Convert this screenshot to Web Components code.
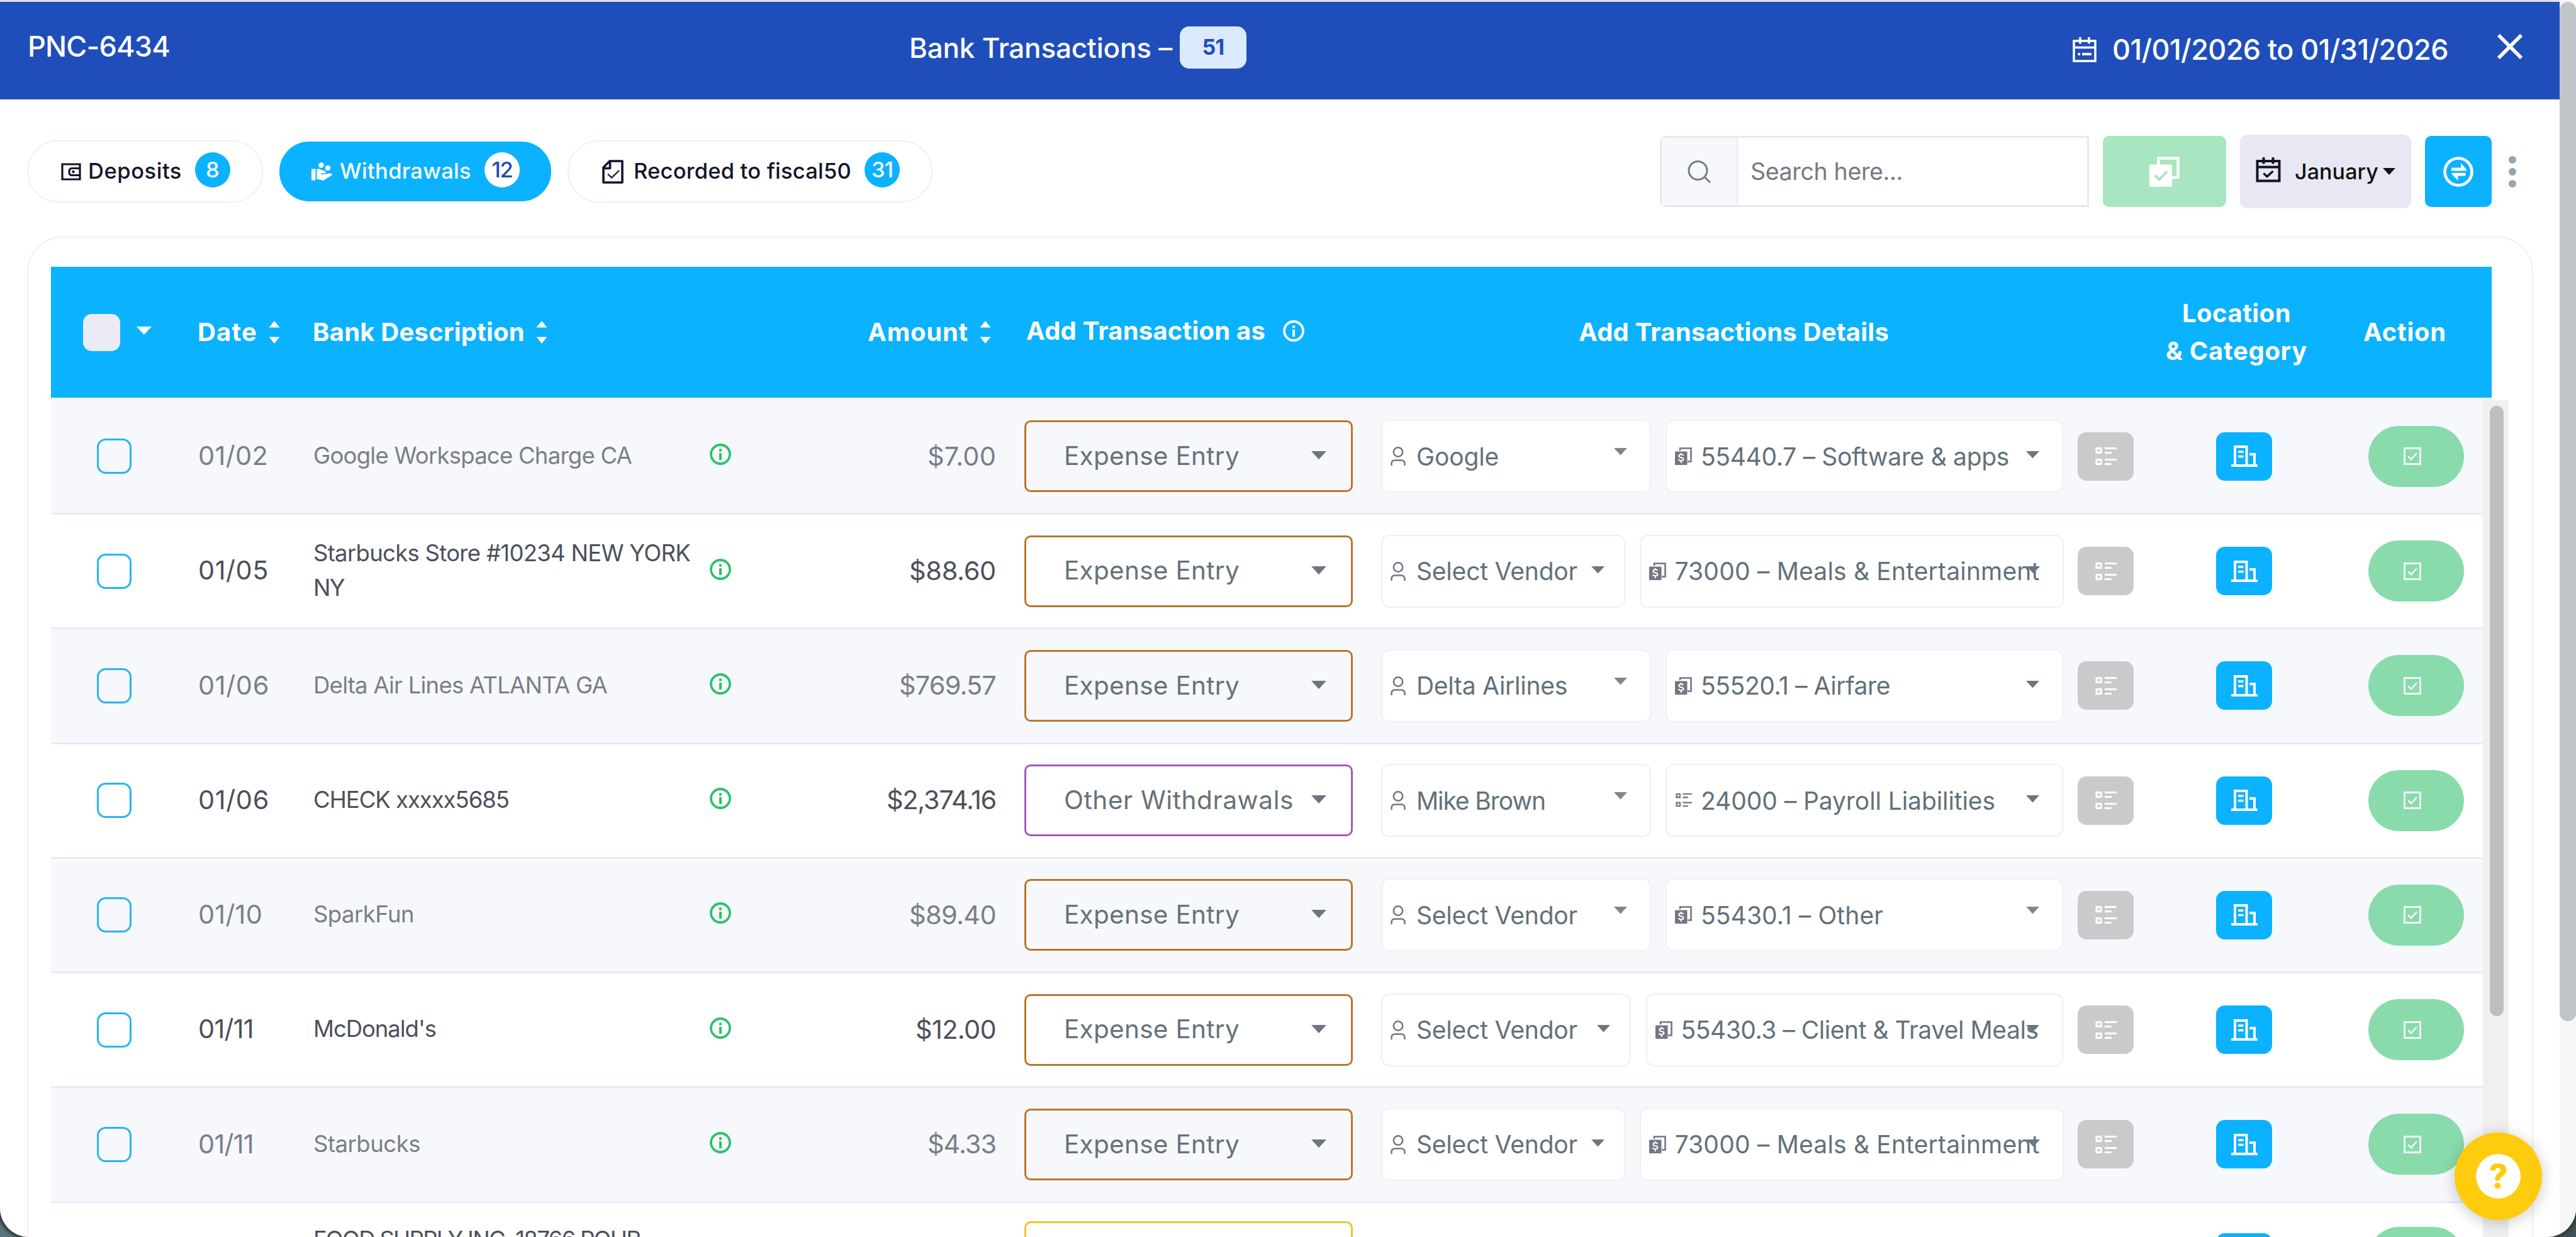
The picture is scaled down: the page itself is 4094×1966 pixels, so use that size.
<!DOCTYPE html>
<html lang="en">
<head>
<meta charset="utf-8">
<title>Bank Transactions</title>
<style>
  html, body { margin: 0; height: 100%; overflow: hidden; }
  body {
    background: linear-gradient(to right, #5b7680, #3f5157);
    font-family: Inter, "Open Sans", "Liberation Sans", sans-serif;
    font-size: 40px;
    line-height: 1;
    color: #50545f;
  }
</style>
</head>
<body>
<bank-app></bank-app>

<script>
const ICONS = {
  wallet: ['0 0 32 28', '<path fill="none" stroke="currentColor" stroke-width="3.2" d="M30 9V2H2v24h28v-7M30 8.500H17q-4 0-4 5.500t4 5.500h13z"/><circle cx="19.500" cy="14" r="2.300" fill="currentColor"/>'],
  hand: ['0 0 34 30', '<g fill="currentColor"><circle cx="15.500" cy="4.500" r="4.300"/><circle cx="26" cy="9" r="4.300"/><rect x="0" y="10.500" width="6.500" height="18"/><path d="M8.500 10.500h4l9 3.500q2 1 1.500 3.500h-8v1.500h8l4-1.500q5.500-.5 6 2.500L19 29 8.500 26.500z"/></g>'],
  filecheck: ['0 0 34 38', '<path fill="none" stroke="currentColor" stroke-width="3.600" stroke-linejoin="round" d="M12 2h20v34H2V12zM2 13.500h10.500V2"/><path fill="none" stroke="currentColor" stroke-width="2.300" d="M9 22.500l6 6L27 17"/>'],
  calendar: ['0 0 38 40', '<path fill="none" stroke="currentColor" stroke-width="3.500" d="M2 6h34v32H2zM2 16.500h34M12 0v10.500M26 0v10.500"/><path fill="currentColor" d="M8.500 25h3.500v4H8.500zM15 25h15v4H15z"/>'],
  calcheck: ['0 0 40 40', '<path fill="none" stroke="currentColor" stroke-width="4" d="M2.500 6h35v31.500h-35zM2.500 15.500h35M12.500 0v10.500M27.500 0v10.500"/><path fill="none" stroke="currentColor" stroke-width="3.600" d="M12.500 25.500l5.500 5 9.500-8.500"/>'],
  close: ['0 0 42 42', '<path stroke="currentColor" stroke-width="6" d="M2 2l38 38M40 2L2 40"/>'],
  search: ['0 0 38 36', '<g fill="none" stroke="currentColor" stroke-width="3"><circle cx="16.500" cy="16" r="14.500"/><path d="M27 26.500l9 8.500"/></g>'],
  checkall: ['0 0 48 48', '<path fill="none" stroke="currentColor" stroke-width="4.600" d="M14.500 14V2.500h31V33H36"/><rect y="12.500" width="36" height="35.500" rx="2" fill="currentColor"/><path fill="none" stroke="#a7e6c0" stroke-width="3.800" d="M8.500 29.500l7 7 12.500-13"/>'],
  transfer: ['0 0 48 48', '<circle cx="24" cy="24" r="21.500" fill="none" stroke="currentColor" stroke-width="4.600"/><path fill="currentColor" d="M13 17.500h15V10l9 10.500v2H13zM35.500 30.500h-12V38l-10-10.500v-1.800h22z"/>'],
  sort: ['0 0 18 36', '<path fill="currentColor" d="M9 0l8.500 10.500H.5zM9 36l8.500-10.500H.5z"/>'],
  caret: ['0 0 22 12', '<path fill="currentColor" d="M0 0h22L11 12z"/>'],
  info: ['0 0 34 34', '<circle cx="17" cy="17" r="15" fill="none" stroke="currentColor" stroke-width="3.800"/><path fill="currentColor" d="M15 15h4v11h-4zM15 8.500h4v4h-4z"/>'],
  person: ['0 0 24 30', '<g fill="none" stroke="currentColor" stroke-width="2.500"><circle cx="12" cy="8.500" r="7.200"/><path d="M1.500 30v-3q0-5.500 5.500-5.500h10q5.500 0 5.500 5.500v3"/></g>'],
  bills: ['0 0 27 28', '<path fill="none" stroke="currentColor" stroke-width="2.600" d="M8 5V1.500h17.500v21H20"/><rect y="6.500" width="19.500" height="21.500" rx="1" fill="currentColor"/><path fill="none" stroke="#fff" stroke-width="2" d="M13.500 13q-1-1.800-4-1.800-3.200 0-3.200 2.500c0 3.700 7.200 1.400 7.200 5 0 2.300-1.700 2.500-3.800 2.500q-3.200 0-3.900-2M9.800 9v2.500M9.800 22v3"/>'],
  list: ['0 0 34 30', '<path fill="none" stroke="currentColor" stroke-width="3" d="M2 2.500h7v7H2zM2 20.500h7v7H2z"/><path fill="currentColor" d="M15 1h19v3H15zM15 8h11v3H15zM15 19h19v3H15zM15 26h11v3H15z"/>'],
  building: ['0 0 42 34', '<path fill="none" stroke="currentColor" stroke-width="4" d="M0 32h42M6 32V2h18.500v30M29 14h8v18"/><path stroke="currentColor" stroke-width="3.400" d="M11 10h8.500M11 17.500h8.500"/>'],
  check: ['0 0 28 28', '<path fill="none" stroke="currentColor" stroke-width="2.800" d="M1.500 1.500h25v25h-25z"/><path fill="none" stroke="currentColor" stroke-width="2.600" d="M7.500 14.500l4.500 4.500 9-10"/>']
}

class UiIcon extends HTMLElement {
  constructor() {
    super()
    this.attachShadow({mode: 'open'})
  }
  connectedCallback() {
    const [box, body] = ICONS[this.getAttribute('name')]
    const [, , w, h] = box.split(' ')
    this.shadowRoot.innerHTML = `<style>
      :host { display: block; flex: none; width: ${this.getAttribute('w') || w}px; }
      svg { display: block; width: 100%; }
    </style><svg viewBox="0 0 ${w} ${h}">${body}</svg>`
  }
}
customElements.define('ui-icon', UiIcon)

// single line label that tracks its letters so the line fills the width "w"
class FitText extends HTMLElement {
  constructor() {
    super()
    this.attachShadow({mode: 'open'})
    this.shadowRoot.innerHTML = `<style>
      :host { display: block; flex: none; white-space: nowrap; }
      span { display: inline-block; }
    </style><span><slot></slot></span>`
  }
  connectedCallback() {
    const target = Number(this.getAttribute('w')) + 4
    const count = this.textContent.length
    const span = this.shadowRoot.querySelector('span')
    this.style.width = target + 'px'
    this.style.marginLeft = '-2px'
    this.style.marginRight = '-2px'
    const natural = span.getBoundingClientRect().width
    span.style.letterSpacing = (target - natural) / count + 'px'
  }
}

class AppHeader extends HTMLElement {
  constructor() {
    super()
    this.attachShadow({mode: 'open'})
    this.shadowRoot.innerHTML = `<style>
      :host {
        display: grid;
        grid-template-columns: 1401px 1fr auto;
        height: 158px;
        box-sizing: border-box;
        padding: 0 59px 0 46px;
        border-top: 3px solid #dcdfe3;
        background: #1f4eba;
        color: #fff;
        font-size: 45px; font-weight: 500;
      }
      div { display: flex; height: 145px; align-items: center; }
      .account { height: 140px; }
      .title { font-size: 44px; }
      .range { height: 151px; }
      .badge {
        width: 106px; height: 67px; margin: -1px 0 0 14px;
        border-radius: 15px;
        background: #dceafd; color: #1f4eba;
        font-size: 34px; font-weight: 700;
        justify-content: center;
      }
      .range fit-text { margin-left: 25px; }
      .range ui-icon:first-child { margin-right: 27px; }
      .range ui-icon:last-child { margin: -9px 0 0 80px; }
    </style>
    <div class="account"><fit-text w="222">PNC-6434</fit-text></div>
    <div class="title"><fit-text w="414">Bank Transactions –</fit-text><div class="badge"><fit-text w="31">51</fit-text></div></div>
    <div class="range"><ui-icon name="calendar" w="38"></ui-icon><fit-text w="530">01/01/2026 to 01/31/2026</fit-text><ui-icon name="close" w="40"></ui-icon></div>`
  }
}
customElements.define('app-header', AppHeader)

class FilterTab extends HTMLElement {
  constructor() {
    super()
    this.attachShadow({mode: 'open'})
  }
  connectedCallback() {
    this.shadowRoot.innerHTML = `<style>
      :host {
        display: flex; align-items: center;
        box-sizing: border-box;
        height: 99px;
        padding: 0 50px 0 52px;
        border: 2px solid #e7f3fe;
        border-radius: 50px;
        color: #14142b;
        font-size: 34.5px; font-weight: 500;
      }
      :host([active]) {
        height: 95px;
        background: #0bb2ff; border-color: #0bb2ff; color: #fff;
        padding: 0 48px 0 49px;
      }
      ui-icon { margin-right: 13px; }
      ui-icon[name=filecheck] { margin: 0 18px 0 1px; }
      .count {
        display: flex; align-items: center; justify-content: center;
        width: 56px; height: 56px; margin: -5px 0 0 23px;
        border-radius: 50%;
        background: #0bb2ff; color: #fff;
      }
      :host([active]) .count { background: #fff; color: #1f4eba; }
    </style>
    <ui-icon name="${this.getAttribute('icon')}"></ui-icon>
    <fit-text w="${this.getAttribute('w')}">${this.getAttribute('label')}</fit-text>
    <span class="count"><fit-text w="${this.getAttribute('cw')}">${this.getAttribute('count')}</fit-text></span>`
  }
}
customElements.define('filter-tab', FilterTab)

class ToolBar extends HTMLElement {
  constructor() {
    super()
    this.attachShadow({mode: 'open'})
    this.shadowRoot.innerHTML = `<style>
      :host { display: flex; align-items: center; height: 117px; padding: 56px 69px 0 43px; }
      .tabs { display: flex; gap: 26px; align-items: center; flex: 1; }
      .search {
        display: flex; align-items: center;
        box-sizing: border-box;
        width: 682px; height: 113px; margin-right: 22px;
        border: 3px solid #e8e8f1; border-radius: 10px 0 0 10px;
        color: #757b84; font-size: 37.5px;
      }
      .lens {
        display: flex; align-items: center; justify-content: center;
        box-sizing: border-box;
        width: 121px; height: 100%; margin-right: 22px;
        background: #f7f8fb; border-right: 2px solid #e8e8f1;
      }
      .btn {
        display: flex; align-items: center; justify-content: center;
        height: 113px; border-radius: 10px; color: #fff;
      }
      .all { width: 196px; margin-right: 22px; background: #a7e6c0; }
      .month {
        width: 272px; height: 117px; margin-right: 22px; border-radius: 12px;
        background: #e8e8f2; color: #111; font-size: 34px; font-weight: 500;
        gap: 24px;
      }
      .month ui-icon:first-child { color: #14142b; margin-top: -5px; }
      .month ui-icon:last-child { margin: 0 0 0 -15px; }
      .swap { width: 106px; background: #0bb2ff; }
      .dots { display: flex; flex-direction: column; gap: 7px; width: 12px; margin-left: 27px; }
      .dots i { width: 12px; height: 12px; border-radius: 50%; background: #93a6ae; }
    </style>
    <div class="tabs">
      <filter-tab icon="wallet" label="Deposits" w="145" count="8" cw="18"></filter-tab>
      <filter-tab active icon="hand" label="Withdrawals" w="205" count="12" cw="29"></filter-tab>
      <filter-tab icon="filecheck" label="Recorded to fiscal50" w="342" count="31" cw="30"></filter-tab>
    </div>
    <div class="search"><span class="lens"><ui-icon name="search"></ui-icon></span><fit-text w="238">Search here...</fit-text></div>
    <div class="btn all"><ui-icon name="checkall"></ui-icon></div>
    <div class="btn month"><ui-icon name="calcheck"></ui-icon><fit-text w="129">January</fit-text><ui-icon name="caret" w="20"></ui-icon></div>
    <div class="btn swap"><ui-icon name="transfer"></ui-icon></div>
    <div class="dots"><i></i><i></i><i></i></div>`
  }
}
customElements.define('tool-bar', ToolBar)

class TableHead extends HTMLElement {
  constructor() {
    super()
    this.attachShadow({mode: 'open'})
    this.shadowRoot.innerHTML = `<style>
      :host {
        display: grid;
        grid-template-columns: 184px 183px 798px 283px 566px 1196px 416px 128px;
        align-items: center;
        box-sizing: border-box;
        width: 3879px; height: 208px;
        padding-left: 51px;
        background: #0bb2ff; color: #fff;
        font-size: 40px; font-weight: 700;
      }
      div { display: flex; align-items: center; gap: 20px; }
      .box { width: 59px; height: 59px; border-radius: 14px; background: #ebebf6; }
      .pick { gap: 26px; }
      .pick ui-icon { margin-top: -5px; }
      .amount { justify-content: flex-end; padding-right: 5px; }
      .type { padding-left: 53px; gap: 30px; margin-top: -5px; }
      .details { justify-content: center; padding-left: 23px; }
      .loc { flex-direction: column; padding-left: 9px; }
    </style>
    <div class="pick"><span class="box"></span><ui-icon name="caret" w="24"></ui-icon></div>
    <div><fit-text w="91">Date</fit-text><ui-icon name="sort"></ui-icon></div>
    <div><fit-text w="333">Bank Description</fit-text><ui-icon name="sort"></ui-icon></div>
    <div class="amount"><fit-text w="156">Amount</fit-text><ui-icon name="sort"></ui-icon></div>
    <div class="type"><fit-text w="376">Add Transaction as</fit-text><ui-icon name="info" w="34"></ui-icon></div>
    <div class="details"><fit-text w="489">Add Transactions Details</fit-text></div>
    <div class="loc"><fit-text w="169">Location</fit-text><fit-text w="221">&amp; Category</fit-text></div>
    <div><fit-text w="128">Action</fit-text></div>`
  }
}
customElements.define('table-head', TableHead)

// select-like box: optional icon, value, caret
class PickerBox extends HTMLElement {
  constructor() {
    super()
    this.attachShadow({mode: 'open'})
  }
  connectedCallback() {
    const icon = this.getAttribute('icon')
    const value = this.getAttribute('value')
    const high = this.hasAttribute('high')
    let inset = 36
    if (!icon) inset = 39
    if (icon === 'person' && !high) inset = 31
    this.shadowRoot.innerHTML = `<style>
      :host {
        display: flex; align-items: center;
        position: relative;
        box-sizing: border-box;
        width: ${this.getAttribute('width')}px; height: 116px;
        border: 2.5px solid #eef0f3; border-radius: 13px;
        padding-left: ${icon ? 13 : 62}px;
        background: #fff; color: #61717a;
        font-size: 39px;
      }
      :host([type]) {
        height: 114px; border: 3px solid var(--edge); border-radius: 10px;
        background: none; color: #66727b; font-size: 40.5px;
      }
      .mark { color: #737683; margin-right: 16px; }
      .mark[name=person] { margin-right: 19px; }
      .mark[name=list] { margin: -2px 16px 0 1px; }
      /* the caret stays put and long values run under it */
      .caret {
        position: absolute; right: ${inset}px;
        top: calc(50% - ${high ? 13 : 8}px);
        color: ${high ? '#858585' : '#6f7481'};
      }
    </style>
    ${icon ? `<ui-icon class="mark" name="${icon}" ${icon === 'list' ? 'w="26"' : ''}></ui-icon>` : ''}
    ${value ? `<fit-text w="${this.getAttribute('w')}">${value.replace('&', '&amp;')}</fit-text>` : ''}
    <ui-icon class="caret" name="caret" w="${icon ? 21 : 24}"></ui-icon>`
  }
}
customElements.define('picker-box', PickerBox)

const EDGES = {expense: '#b8772b', other: '#a659b5', yellow: '#f2c12e'}

class TransactionRow extends HTMLElement {
  constructor() {
    super()
    this.attachShadow({mode: 'open'})
  }
  set data(d) {
    const fit = ([text, w]) => text ? `<fit-text w="${w}">${text}</fit-text>` : '<div class="blank"></div>'
    this.shadowRoot.innerHTML = `<style>
      :host {
        display: grid;
        grid-template-columns: 163px 183px 628px 122px 331px 47px 522px 45px 1196px 131px 89px 153px 152px;
        align-items: center;
        box-sizing: border-box;
        height: ${d.height || 182.25}px;
        padding-left: 73px;
        border-bottom: 3px solid #e7ecf3;
        background: #fff; color: #4c505b;
        font-size: 41.500px;
      }
      :host(:nth-child(odd)) { background: #f6f8fb; color: #7a7e8a; }
      .box {
        box-sizing: border-box; width: 55px; height: 56px;
        border: 3px solid #27b4f8; border-radius: 14px;
      }
      .date { margin-top: -1px; }
      .desc { display: flex; flex-direction: column; gap: 18px; font-size: 36.500px; margin-top: -2px; }
      .blank { height: 36.500px; }
      .info { color: #2dc26c; margin-top: -6px; }
      .amount { display: flex; justify-content: flex-end; grid-column: 5; }
      .type { grid-column: 7; }
      .details { grid-column: 9; display: flex; align-items: center; justify-content: space-between; }
      .sq {
        display: flex; align-items: center; justify-content: center;
        width: 89px; height: 77px; border-radius: 14px;
        background: #c9cacb; color: #fff;
      }
      .place { grid-column: 11; background: #0bb2ff; }
      .go {
        grid-column: 13;
        display: flex; align-items: center; justify-content: center;
        box-sizing: border-box; width: 152px; height: 97px; padding-right: 12px;
        border-radius: 49px; background: #89dbac; color: #f2fbf5;
      }
    </style>
    <span class="box"></span>
    <div class="date">${fit(d.date)}</div>
    <div class="desc">${d.desc.map(fit).join('')}</div>
    <ui-icon class="info" name="info"></ui-icon>
    <div class="amount">${fit(d.amount)}</div>
    <picker-box class="type" type style="--edge: ${EDGES[d.edge || 'expense']}" width="522" value="${d.type[0]}" w="${d.type[1]}"></picker-box>
    <div class="details">${d.vendor ? `
      <picker-box icon="person" width="${d.split[0]}" value="${d.vendor[0]}" w="${d.vendor[1]}" ${d.high > 0 ? 'high' : ''}></picker-box>
      <picker-box icon="${d.icon || 'bills'}" width="${d.split[1]}" value="${d.category[0]}" w="${d.category[1]}" ${d.high > 1 ? 'high' : ''}></picker-box>
      <span class="sq"><ui-icon name="list"></ui-icon></span>` : ''}
    </div>
    <span class="sq place"><ui-icon name="building"></ui-icon></span>
    <span class="go"><ui-icon name="check"></ui-icon></span>`
  }
}
customElements.define('transaction-row', TransactionRow)

const EXPENSE = ['Expense Entry', 275]
const SELECT = ['Select Vendor', 252]
const ROWS = [
  {date: ['01/02', 107], desc: [['Google Workspace Charge CA', 502]], amount: ['$7.00', 105], type: EXPENSE,
    vendor: ['Google', 127], category: ['55440.7 – Software &amp; apps', 486], split: [429, 632], high: 1},
  {date: ['01/05', 108], desc: [['Starbucks Store #10234 NEW YORK', 595], ['NY', 45]], amount: ['$88.60', 134], type: EXPENSE,
    vendor: SELECT, category: ['73000 – Meals &amp; Entertainment', 576], split: [388, 674]},
  {date: ['01/06', 109], desc: [['Delta Air Lines ATLANTA GA', 463]], amount: ['$769.57', 150], type: EXPENSE,
    vendor: ['Delta Airlines', 236], category: ['55520.1 – Airfare', 297], split: [429, 632], high: 1},
  {date: ['01/06', 109], desc: [['CHECK xxxxx5685', 307]], amount: ['$2,374.16', 170], type: ['Other Withdrawals', 361], edge: 'other',
    vendor: ['Mike Brown', 201], category: ['24000 – Payroll Liabilities', 464], split: [429, 632], high: 1, icon: 'list'},
  {date: ['01/10', 98], desc: [['SparkFun', 156]], amount: ['$89.40', 134], type: EXPENSE,
    vendor: SELECT, category: ['55430.1 – Other', 286], split: [429, 632], high: 2},
  {date: ['01/11', 84], desc: [['McDonald\'s', 191]], amount: ['$12.00', 124], type: EXPENSE,
    vendor: SELECT, category: ['55430.3 – Client &amp; Travel Meals', 564], split: [397, 663]},
  {date: ['01/11', 84], desc: [['Starbucks', 166]], amount: ['$4.33', 105], type: EXPENSE,
    vendor: SELECT, category: ['73000 – Meals &amp; Entertainment', 576], split: [388, 674]},
  // only the top edge of this one fits in the window
  {date: [''], desc: [['FOOD SUPPLY INC. 18766 POUR', 515], ['']], amount: [''], type: ['', 0], edge: 'yellow', height: 176}
]

class TransactionTable extends HTMLElement {
  constructor() {
    super()
    this.attachShadow({mode: 'open'})
    this.shadowRoot.innerHTML = `<style>
      :host {
        display: block;
        box-sizing: border-box;
        width: 3983px; height: 1700px; margin: 45px 0 0 43px;
        padding: 46px 0 0 36px;
        border: 2px solid #eff0f1; border-radius: 56px;
      }
      .body { display: flex; padding-top: 3.750px; background: linear-gradient(#f3f6f9 3.750px, transparent 0) no-repeat; background-size: 3879px 100%; width: 3906px; }
      .rows { width: 3865px; }
      .track { width: 41px; background: #f0f0f0; padding: 9px 8px 0 11px; box-sizing: border-box; }
      .thumb { height: 970px; border-radius: 11px; background: #bebebe; }
    </style>
    <table-head></table-head>
    <div class="body">
      <div class="rows"></div>
      <div class="track"><div class="thumb"></div></div>
    </div>`
  }
  connectedCallback() {
    const rows = this.shadowRoot.querySelector('.rows')
    for (const data of ROWS) {
      const row = document.createElement('transaction-row')
      rows.appendChild(row)
      row.data = data
    }
  }
}
customElements.define('transaction-table', TransactionTable)

class HelpButton extends HTMLElement {
  constructor() {
    super()
    this.attachShadow({mode: 'open'})
    this.shadowRoot.innerHTML = `<style>
      :host {
        position: absolute; right: 54px; bottom: 27px;
        display: flex; align-items: center; justify-content: center;
        width: 139px; height: 139px; border-radius: 50%;
        background: #ffcb0d; color: #ffcb0d;
        box-shadow: 0 4px 24px rgba(0, 0, 0, .22);
      }
      span {
        display: flex; align-items: center; justify-content: center;
        width: 71px; height: 71px; border-radius: 50%;
        background: #fff; font-size: 52px; font-weight: 800;
      }
    </style><span>?</span>`
  }
}
customElements.define('help-button', HelpButton)

class BankApp extends HTMLElement {
  constructor() {
    super()
    this.attachShadow({mode: 'open'})
    this.shadowRoot.innerHTML = `<style>
      :host {
        display: flex; position: relative;
        box-sizing: border-box;
        width: 4094px; height: 1966px; overflow: hidden;
        border-radius: 0 0 46px 46px;
        background: #fff;
        box-shadow: 0 0 5px 4px #363636;
      }
      main { width: 4068px; height: 100%; overflow: hidden; }
      .bar { width: 26px; background: #f6f6f7; }
      .bar div { height: 1620px; margin-top: 3px; border-radius: 13px; background: #c2c5c7; }
    </style>
    <main>
      <app-header></app-header>
      <tool-bar></tool-bar>
      <transaction-table></transaction-table>
    </main>
    <div class="bar"><div></div></div>
    <help-button></help-button>`
  }
}
customElements.define('bank-app', BankApp)

// registered last, when every label is already laid out and can be measured
customElements.define('fit-text', FitText)
</script>
</body>
</html>
